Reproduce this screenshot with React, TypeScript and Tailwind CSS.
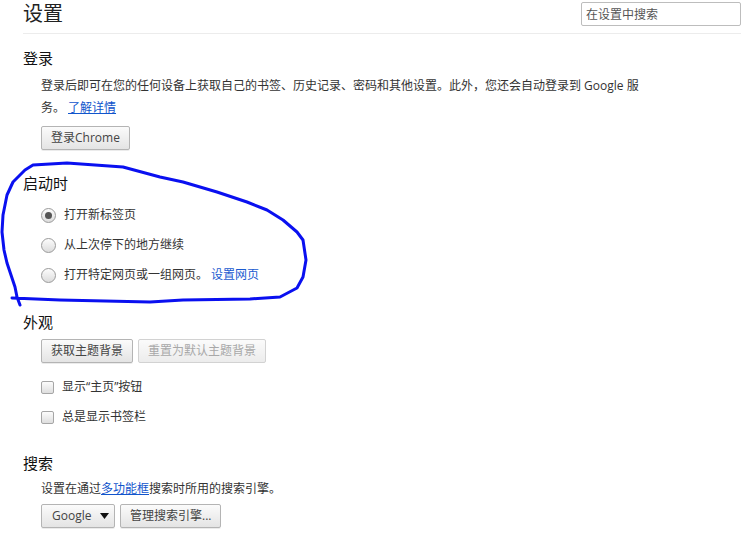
import { ReactNode } from 'react'

const btn =
  'h-6 px-[9px] rounded-[2px] border border-[#b4b4b4] bg-linear-to-b from-[#fbfbfb] to-[#e4e4e4] text-[12px] text-[#444] shadow-[0_1px_0_rgba(0,0,0,0.08)] flex items-center'
const btnDisabled =
  'h-6 px-[9px] rounded-[2px] border border-[#d2d2d2] bg-linear-to-b from-[#fbfbfb] to-[#ececec] text-[12px] text-[#a8a8a8] flex items-center'

function Heading({ children, className = '' }: { children: ReactNode; className?: string }) {
  return <h3 className={`text-[15px] leading-5 text-[#111] ${className}`}>{children}</h3>
}

function Radio({ checked, children }: { checked?: boolean; children: ReactNode }) {
  return (
    <div className="h-[30px] flex items-center">
      <span className="w-[15px] h-[15px] rounded-full border border-[#9a9a9a] bg-linear-to-b from-[#fcfcfc] to-[#dcdcdc] flex items-center justify-center">
        {checked && <span className="w-[7px] h-[7px] rounded-full bg-[#555]" />}
      </span>
      <span className="ml-[8px]">{children}</span>
    </div>
  )
}

function Checkbox({ children }: { children: ReactNode }) {
  return (
    <div className="h-[30px] flex items-center">
      <span className="w-[13px] h-[13px] rounded-[2px] border border-[#a6a6a6] bg-linear-to-b from-[#fcfcfc] to-[#dedede]" />
      <span className="ml-[8px]">{children}</span>
    </div>
  )
}

export default function App() {
  return (
    <div className="relative w-[755px] h-[539px] overflow-hidden bg-white pl-[23px] pr-[14px] font-['Open_Sans','Noto_Sans_CJK_SC',sans-serif] text-[12px] text-[#333]">
      {/* 顶部 */}
      <div className="h-[34px] pb-[5px] border-b border-[#ececec] flex justify-between items-center">
        <h1 className="text-[20px] leading-7 text-[#222]">设置</h1>
        <input
          placeholder="在设置中搜索"
          className="w-[160px] h-6 px-[4px] border border-[#bdbdbd] rounded-[2px] text-[12px] outline-none placeholder:text-[#555]"
        />
      </div>

      {/* 登录 */}
      <Heading className="mt-[14px]">登录</Heading>
      <div className="pl-[18px]">
        <p className="mt-[7px] leading-[22px] w-[600px]">
          登录后即可在您的任何设备上获取自己的书签、历史记录、密码和其他设置。此外，您还会自动登录到 Google 服务。
          <a className="ml-[3px] text-[#1155cc] underline">了解详情</a>
        </p>
        <div className="mt-[7px] flex">
          <button className={btn}>登录Chrome</button>
        </div>
      </div>

      {/* 启动时 */}
      <Heading className="mt-[23px]">启动时</Heading>
      <div className="pl-[18px] mt-[7px]">
        <Radio checked>打开新标签页</Radio>
        <Radio>从上次停下的地方继续</Radio>
        <Radio>
          打开特定网页或一组网页。<a className="ml-[3px] text-[#1a5bd0]">设置网页</a>
        </Radio>
      </div>

      {/* 外观 */}
      <Heading className="mt-[22px]">外观</Heading>
      <div className="pl-[18px]">
        <div className="mt-[7px] flex gap-[5px]">
          <button className={btn}>获取主题背景</button>
          <button className={btnDisabled}>重置为默认主题背景</button>
        </div>
        <div className="mt-[9px]">
          <Checkbox>显示“主页”按钮</Checkbox>
          <Checkbox>总是显示书签栏</Checkbox>
        </div>
      </div>

      {/* 搜索 */}
      <Heading className="mt-[21px]">搜索</Heading>
      <div className="pl-[18px]">
        <p className="mt-[5px] leading-[22px]">
          设置在通过<a className="text-[#1155cc] underline">多功能框</a>搜索时所用的搜索引擎。
        </p>
        <div className="mt-[4px] flex gap-[5px]">
          <button className={`${btn} w-[74px] justify-between !pl-[10px] !pr-[5px]`}>
            <span>Google</span>
            <svg width="9" height="6" viewBox="0 0 9 6">
              <path d="M0 0h9L4.5 6z" fill="#111" />
            </svg>
          </button>
          <button className={btn}>管理搜索引擎...</button>
        </div>
      </div>

      {/* 手绘圈注 */}
      <svg className="absolute left-0 top-0 pointer-events-none" width="755" height="539">
        <path
          d="M12 298 L60 300 L150 302 L183 300 L250 299 L280 297 L297 288 L303 277 L306 260 L303 240 L297 232 L283 220 L267 210 L247 202 L217 192 L183 182 L160 177 L123 167 L67 163 L33 165 L25 170 L13 182 L7 195 L3 215 L2 232 L4 250 L7 263 L12 278 L15 287 L17 297 L20 305"
          fill="none"
          stroke="#0a10f0"
          strokeWidth="3"
          strokeLinejoin="round"
          strokeLinecap="round"
        />
      </svg>
    </div>
  )
}
